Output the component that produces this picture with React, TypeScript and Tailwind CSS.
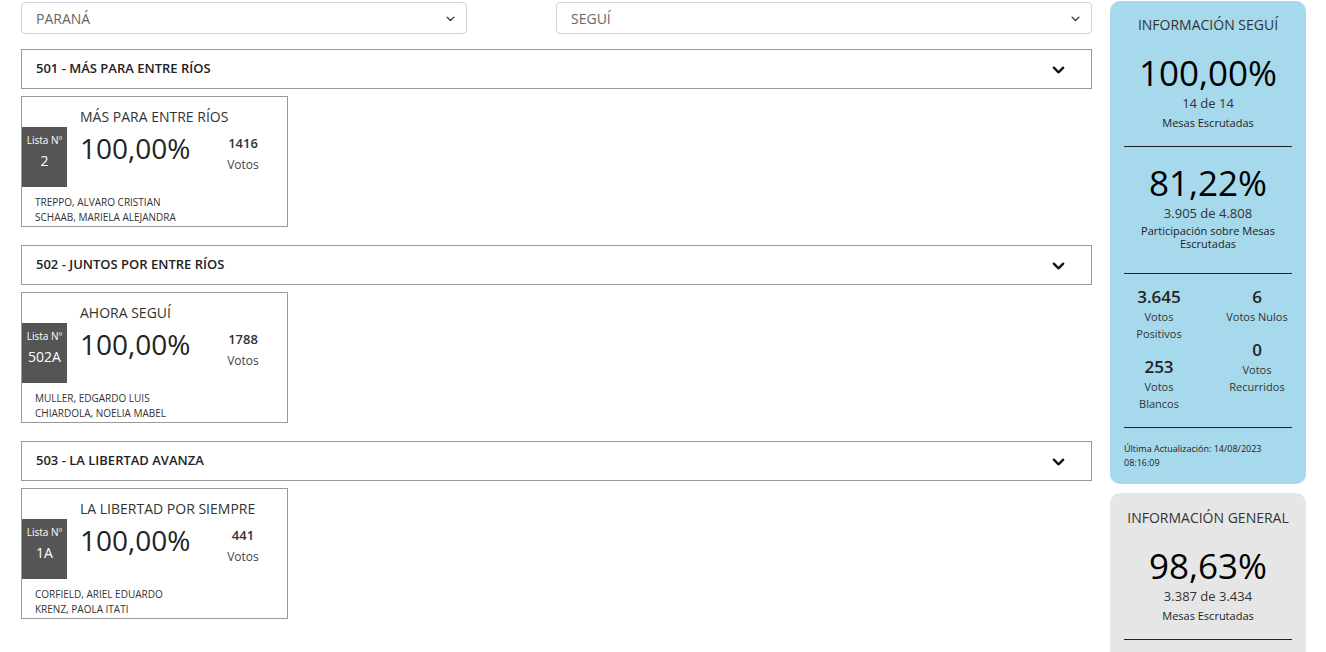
import React from 'react';

type Lista = {
    id: string;
    agrupacion: string;
    nombre: string;
    numero: string;
    porcentaje: string;
    votos: string;
    candidatos: string[];
};

const listas: Lista[] = [
    { id: '501', agrupacion: '501 - MÁS PARA ENTRE RÍOS', nombre: 'MÁS PARA ENTRE RÍOS', numero: '2', porcentaje: '100,00%', votos: '1416', candidatos: ['TREPPO, ALVARO CRISTIAN', 'SCHAAB, MARIELA ALEJANDRA'] },
    { id: '502', agrupacion: '502 - JUNTOS POR ENTRE RÍOS', nombre: 'AHORA SEGUÍ', numero: '502A', porcentaje: '100,00%', votos: '1788', candidatos: ['MULLER, EDGARDO LUIS', 'CHIARDOLA, NOELIA MABEL'] },
    { id: '503', agrupacion: '503 - LA LIBERTAD AVANZA', nombre: 'LA LIBERTAD POR SIEMPRE', numero: '1A', porcentaje: '100,00%', votos: '441', candidatos: ['CORFIELD, ARIEL EDUARDO', 'KRENZ, PAOLA ITATI'] },
];

const Chevron: React.FC<{ className?: string; stroke?: number }> = ({ className, stroke = 2.5 }) => (
    <svg viewBox="0 0 16 16" className={className} fill="none" stroke="currentColor" strokeWidth={stroke} strokeLinecap="round" strokeLinejoin="round">
        <path d="M3 6l5 5 5-5" />
    </svg>
);

const FakeSelect: React.FC<{ value: string; className: string }> = ({ value, className }) => (
    <div className={`h-[32px] flex items-center justify-between border border-[#ced4da] rounded-[4px] bg-white pl-[14px] pr-[10px] ${className}`}>
        <span className="text-[14px] text-[#666]">{value}</span>
        <Chevron className="w-[11px] h-[11px] text-[#343a40]" stroke={2} />
    </div>
);

const ListaCard: React.FC<{ lista: Lista }> = ({ lista }) => (
    <div className="w-[267px] h-[131px] border border-[#999] bg-white mt-[7px] pt-[10px]">
        <div className="pl-[58px] text-[14px] leading-[20px] text-[#333]">{lista.nombre}</div>
        <div className="flex">
            <div className="w-[45px] h-[60px] bg-[#555] text-white flex flex-col items-center pt-[6px]">
                <span className="text-[10px] leading-[14px]">Lista Nº</span>
                <span className="text-[14px] leading-[20px] mt-[4px]">{lista.numero}</span>
            </div>
            <div className="w-[151px] pl-[13px] text-[28px] leading-[36px] text-[#222] mt-[3px]">{lista.porcentaje}</div>
            <div className="w-[50px] flex flex-col items-center pt-[6px]">
                <span className="text-[13px] leading-[20px] font-semibold text-[#333]">{lista.votos}</span>
                <span className="text-[12px] leading-[18px] text-[#444] mt-[3px]">Votos</span>
            </div>
        </div>
        <div className="px-[13px] pt-[8px] text-[10px] leading-[15px] text-[#333]">
            {lista.candidatos.map(c => <div key={c}>{c}</div>)}
        </div>
    </div>
);

const Stat: React.FC<{ valor: string; label: string[] }> = ({ valor, label }) => (
    <div className="flex flex-col items-center mb-[14px]">
        <span className="text-[17px] leading-[22px] font-semibold text-[#222]">{valor}</span>
        {label.map(l => <span key={l} className="text-[11px] leading-[17px] text-[#333]">{l}</span>)}
    </div>
);

const App: React.FC = () => {
    return (
        <div className="w-[1326px] h-[652px] overflow-hidden bg-white flex pl-[21px] pr-[20px]" style={{ fontFamily: '"Open Sans", "Noto Sans", sans-serif' }}>
            <div className="w-[1071px] pt-[2px]">
                <div className="flex justify-between">
                    <FakeSelect value="PARANÁ" className="w-[446px]" />
                    <FakeSelect value="SEGUÍ" className="w-[536px]" />
                </div>
                <div className="mt-[15px]">
                    {listas.map(l => (
                        <div key={l.id} className="mb-[18px]">
                            <div className="h-[40px] border border-[#999] flex items-center justify-between pl-[14px] pr-[25px]">
                                <span className="text-[13px] font-semibold text-[#222]">{l.agrupacion}</span>
                                <Chevron className="w-[15px] h-[15px] text-[#111]" />
                            </div>
                            <ListaCard lista={l} />
                        </div>
                    ))}
                </div>
            </div>

            <div className="w-[196px] ml-[18px] pt-[1px]">
                <div className="bg-[#a6d9eb] rounded-[10px] pt-[14px] pb-[14px] text-center text-[#222]">
                    <div className="text-[14px] leading-[20px] text-[#333]">INFORMACIÓN SEGUÍ</div>
                    <div className="text-[35px] leading-[42px] font-medium text-black mt-[17px]">100,00%</div>
                    <div className="text-[13px] leading-[18px] text-[#333]">14 de 14</div>
                    <div className="text-[11px] leading-[16px] mt-[3px]">Mesas Escrutadas</div>
                    <div className="mx-[14px] border-t border-[#222] mt-[15px]" />
                    <div className="text-[35px] leading-[42px] font-medium text-black mt-[15px]">81,22%</div>
                    <div className="text-[13px] leading-[18px] text-[#333]">3.905 de 4.808</div>
                    <div className="text-[11px] leading-[13px] mt-[2px] px-[10px]">Participación sobre Mesas Escrutadas</div>
                    <div className="mx-[14px] border-t border-[#222] mt-[23px]" />
                    <div className="grid grid-cols-2 pt-[12px]">
                        <div>
                            <Stat valor="3.645" label={['Votos', 'Positivos']} />
                            <Stat valor="253" label={['Votos', 'Blancos']} />
                        </div>
                        <div>
                            <Stat valor="6" label={['Votos Nulos']} />
                            <Stat valor="0" label={['Votos', 'Recurridos']} />
                        </div>
                    </div>
                    <div className="mx-[14px] border-t border-[#222] mt-[1px]" />
                    <div className="text-left px-[14px] pt-[14px] text-[9px] leading-[14px] text-[#222]">
                        Última Actualización: 14/08/2023<br />08:16:09
                    </div>
                </div>

                <div className="bg-[#e6e6e6] rounded-[10px] mt-[9px] pt-[15px] pb-[20px] text-center text-[#222]">
                    <div className="text-[14px] leading-[20px] text-[#333]">INFORMACIÓN GENERAL</div>
                    <div className="text-[35px] leading-[42px] font-medium text-black mt-[17px]">98,63%</div>
                    <div className="text-[13px] leading-[18px] text-[#333]">3.387 de 3.434</div>
                    <div className="text-[11px] leading-[16px] mt-[3px]">Mesas Escrutadas</div>
                    <div className="mx-[14px] border-t border-[#222] mt-[15px]" />
                </div>
            </div>
        </div>
    );
};

export default App;
